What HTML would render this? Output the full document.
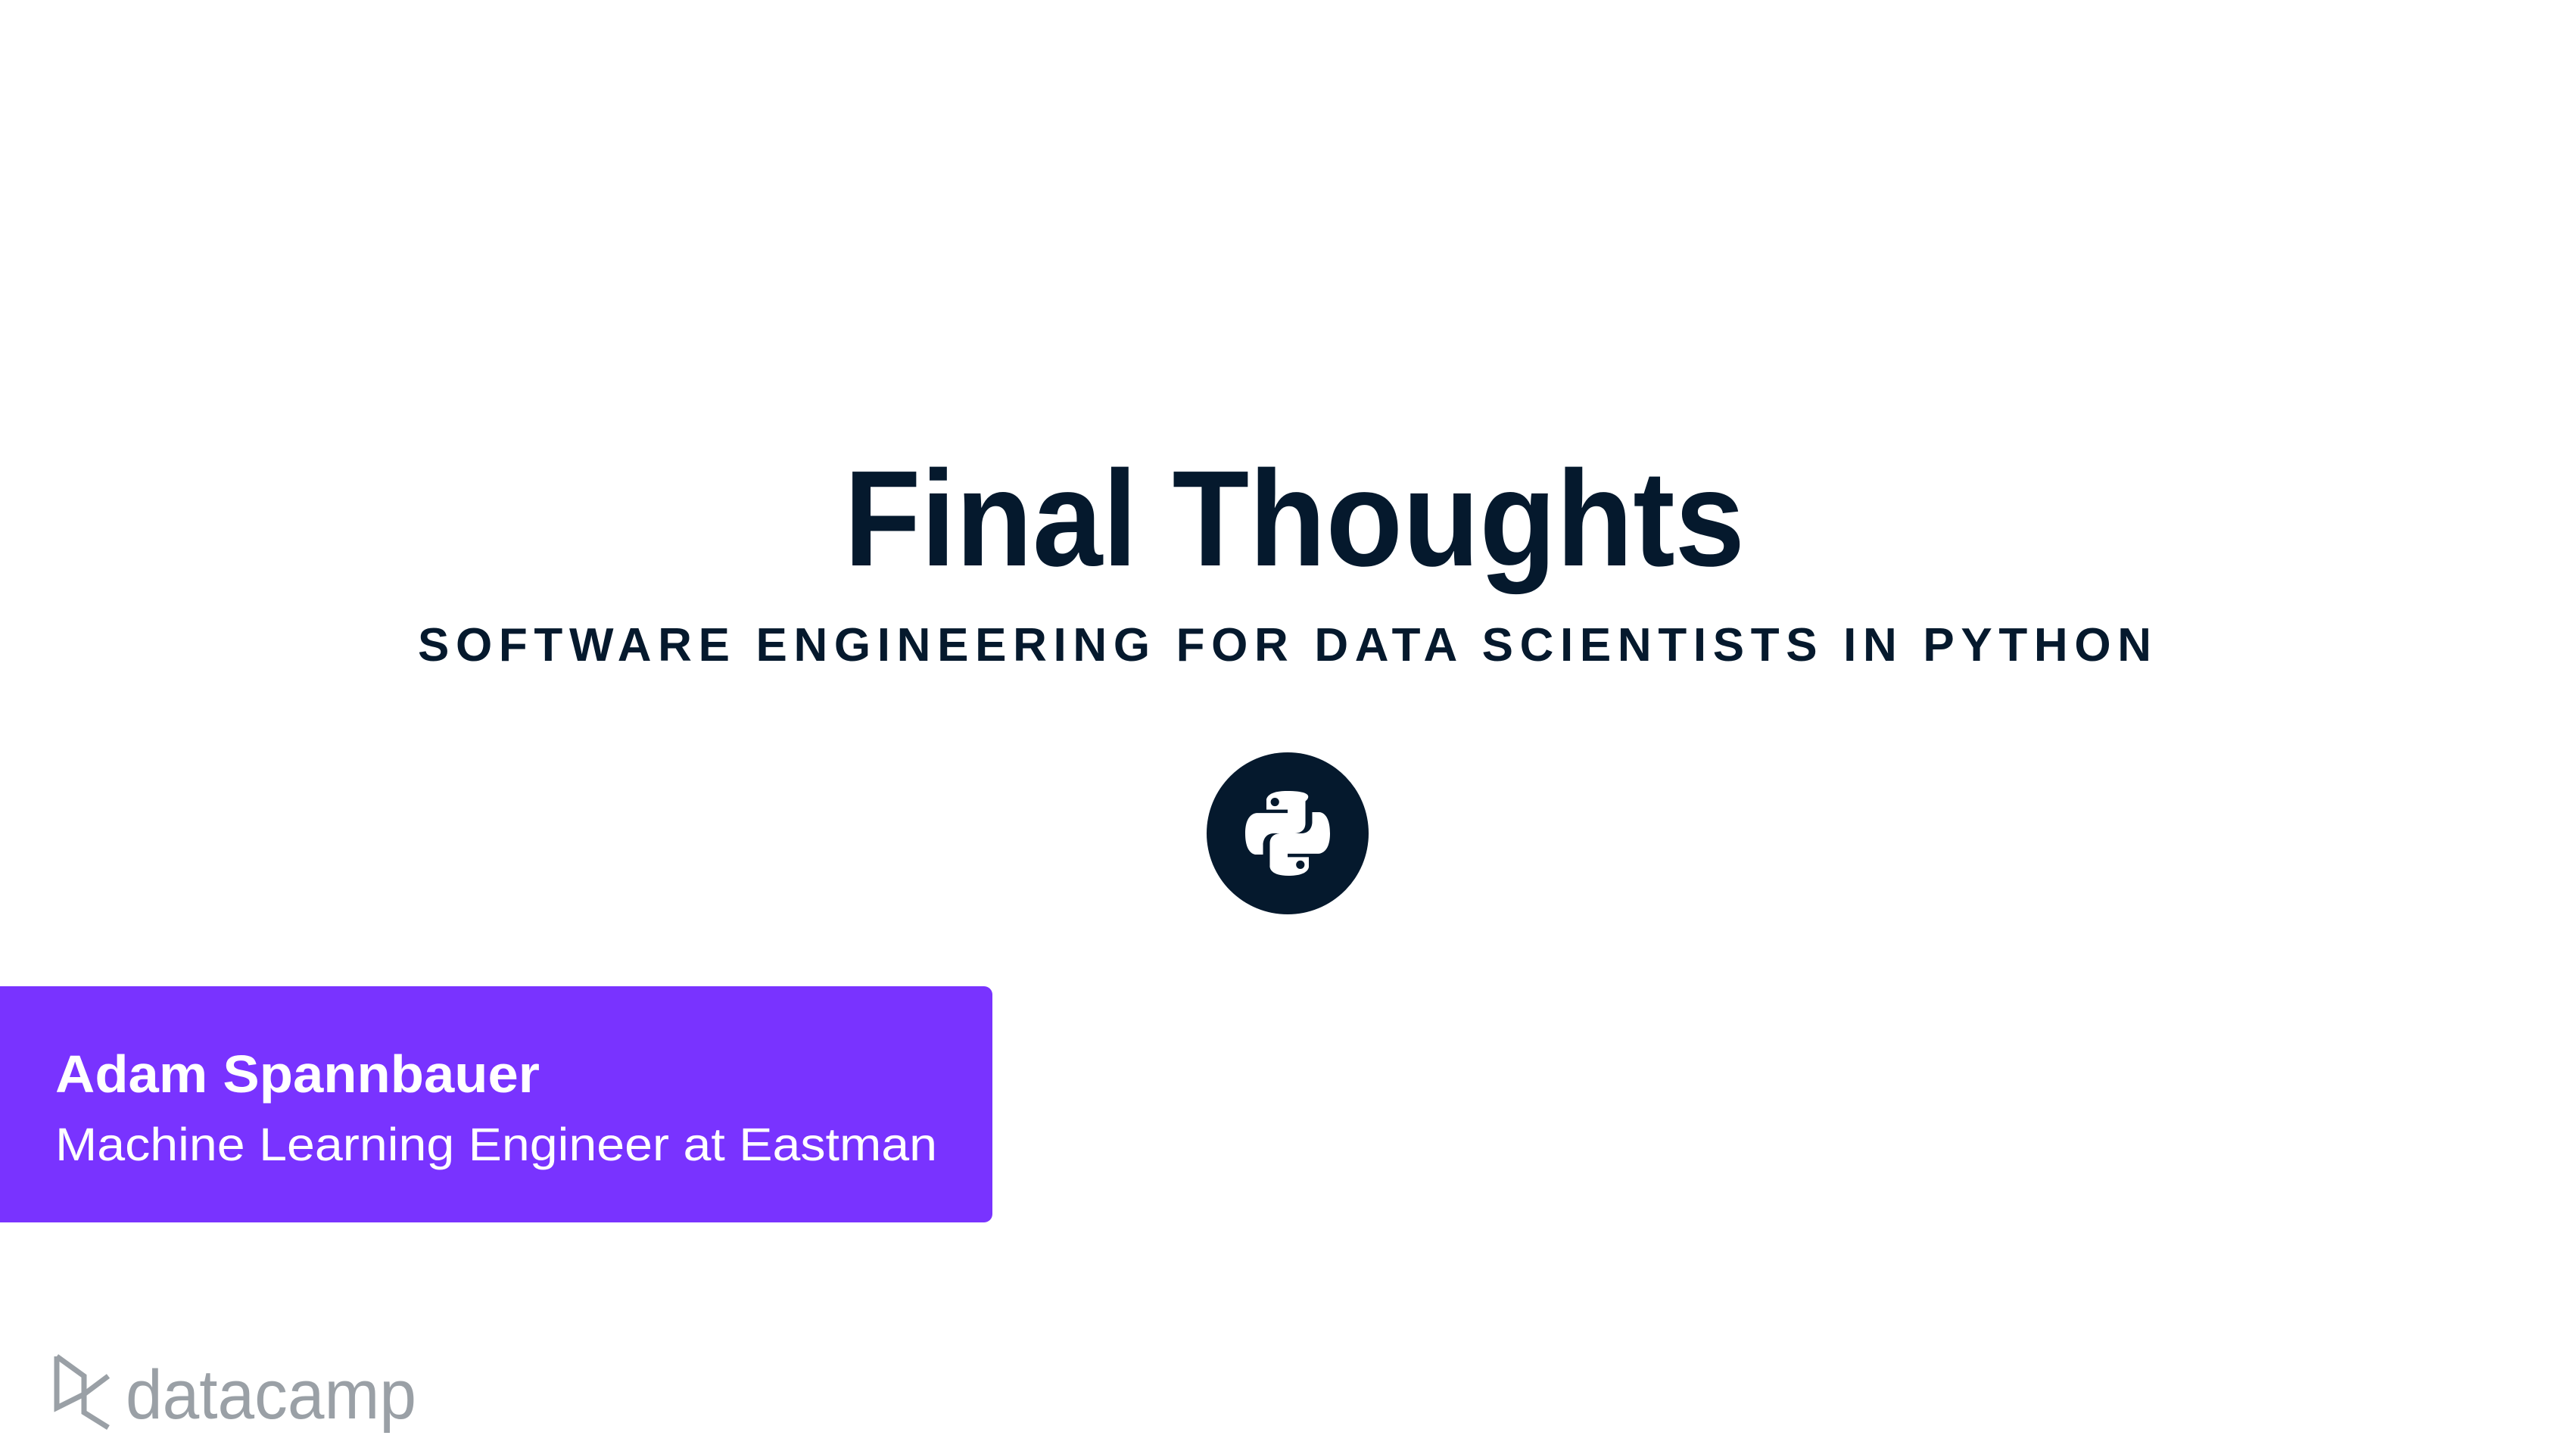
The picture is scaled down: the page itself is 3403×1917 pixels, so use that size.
<!DOCTYPE html>
<html><head><meta charset="utf-8"><style>
html,body{margin:0;padding:0;background:#fff;width:3403px;height:1917px;overflow:hidden}
svg{display:block}
</style></head><body>
<svg width="3403" height="1917" viewBox="0 0 3403 1917" xmlns="http://www.w3.org/2000/svg" font-family="Liberation Sans, sans-serif">
<rect width="3403" height="1917" fill="#fff"/>
<text x="1115" y="747" font-size="180" font-weight="bold" fill="#05192d" textLength="1190" lengthAdjust="spacingAndGlyphs">Final Thoughts</text>
<text x="552" y="873" font-size="62" font-weight="bold" fill="#05192d" textLength="2290" lengthAdjust="spacing">SOFTWARE ENGINEERING FOR DATA SCIENTISTS IN PYTHON</text>
<circle cx="1701" cy="1101" r="107" fill="#05192d"/>
<g transform="translate(1645,1045) scale(1.12)" fill="#fff">
<path d="M49 0C24 0 25 11 25 11v11h25v4H15S0 24 0 50s13 25 13 25h8V63s0-13 13-13h25s12 0 12-12V12S87 0 49 0zM35 8a5 5 0 1 1 0 10a5 5 0 0 1 0-10z"/>
<path d="M51 100c25 0 24-11 24-11V78H50v-4h35s15 2 15-24-13-25-13-25h-8v12s0 13-13 13H41S29 50 29 62v26s-2 12 22 12zM65 92a5 5 0 1 1 0-10a5 5 0 0 1 0 10z"/>
</g>
<path d="M0 1303H1300a11 11 0 0 1 11 11V1604a11 11 0 0 1-11 11H0z" fill="#7933ff"/>
<text x="73" y="1443" font-size="70" font-weight="bold" fill="#fff" textLength="640" lengthAdjust="spacingAndGlyphs">Adam Spannbauer</text>
<text x="73" y="1533" font-size="61" fill="#fff" textLength="1165" lengthAdjust="spacingAndGlyphs">Machine Learning Engineer at Eastman</text>
<g fill="none" stroke="#9aa0a6" stroke-width="7" stroke-linejoin="miter">
<path d="M75 1792V1860L111 1842"/>
<path d="M75 1792L111 1818V1866L143 1886"/>
<path d="M111 1842L143 1818"/>
</g>
<text x="166" y="1874" font-size="92" fill="#9aa0a6" textLength="384" lengthAdjust="spacingAndGlyphs">datacamp</text>
</svg>
</body></html>
